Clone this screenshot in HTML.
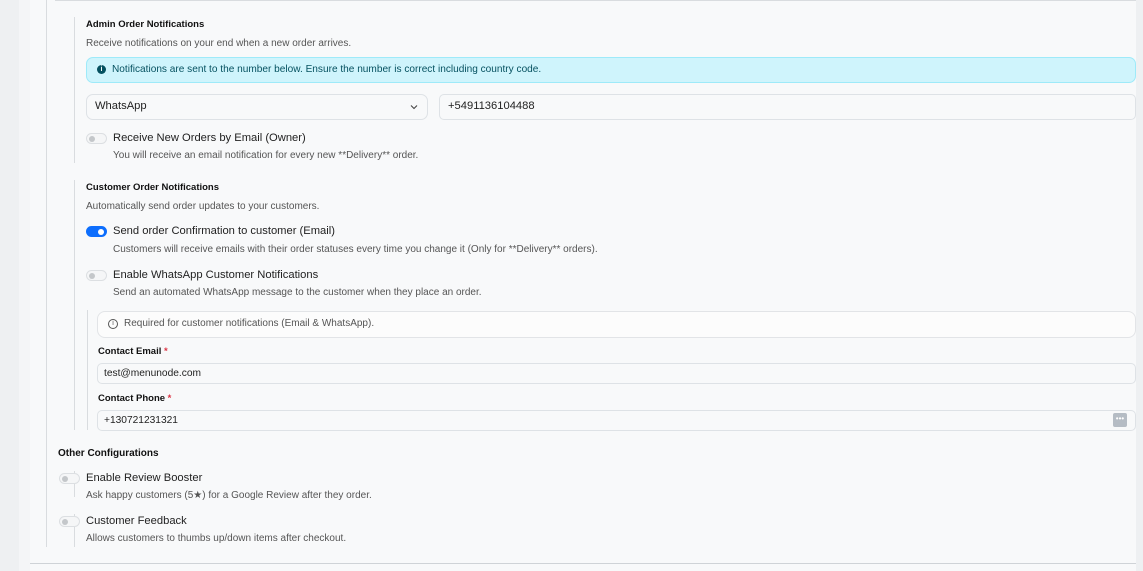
<!DOCTYPE html>
<html><head><style>
*{margin:0;padding:0;box-sizing:border-box}
body{width:1143px;height:571px;overflow:hidden;background:#f8f9fa;font-family:"Liberation Sans",sans-serif;position:relative;color:#212529}
.a{position:absolute;white-space:nowrap}
.h{font-weight:bold;font-size:9.5px;color:#111}
.d{font-size:10px;color:#555}
.l{font-size:11.2px;color:#222}
.vl{position:absolute;width:1px;background:#d9dcdf}
.tg{position:absolute;width:21px;height:11px;border:1px solid #dcdfe2;border-radius:6px;background:#f5f6f7}
.tg::after{content:"";position:absolute;left:2px;top:2px;width:6px;height:6px;border-radius:50%;background:#c4c7ca}
.tg.on{background:#0d6efd;border-color:#0d6efd}
.tg.on::after{left:auto;right:2px;background:#fff}
.box{position:absolute;border:1px solid #dee2e6;background:#f8f9fa}
</style></head><body>
<div class="a" style="left:0;top:0;width:19px;height:571px;background:#eef0f2"></div>
<div class="a" style="left:19px;top:0;width:11px;height:571px;background:#f4f5f7"></div>
<div class="a" style="left:1136px;top:0;width:7px;height:571px;background:#eef0f2"></div>
<div class="a" style="left:55px;top:0;width:1081px;height:1px;background:#d9dcdf"></div>
<div class="vl" style="left:46px;top:0;height:547px"></div>
<div class="vl" style="left:74px;top:17px;height:146px"></div>

<div class="a h" style="left:86px;top:19px">Admin Order Notifications</div>
<div class="a d" style="left:86px;top:38px">Receive notifications on your end when a new order arrives.</div>
<div class="a" style="left:86px;top:57px;width:1050px;height:26px;background:#cff4fc;border:1px solid #9eeaf9;border-radius:7px"></div>
<div class="a" style="left:97px;top:65px;width:9px;height:9px;border-radius:50%;background:#055160;color:#fff;font-size:7px;font-weight:bold;text-align:center;line-height:9px">i</div>
<div class="a" style="left:112px;top:64px;font-size:10.1px;color:#055160">Notifications are sent to the number below. Ensure the number is correct including country code.</div>
<div class="box" style="left:86px;top:94px;width:342px;height:26px;border-radius:7px"></div>
<div class="a" style="left:95px;top:100px;font-size:11.2px;color:#222">WhatsApp</div>
<svg class="a" style="left:409px;top:103px" width="10" height="8"><path d="M2 2.5 5 5.5 8 2.5" fill="none" stroke="#444" stroke-width="1.1"/></svg>
<div class="box" style="left:439px;top:94px;width:697px;height:26px;border-radius:5px"></div>
<div class="a" style="left:448px;top:100px;font-size:11.2px;color:#222">+5491136104488</div>
<div class="tg" style="left:86px;top:133px"></div>
<div class="a l" style="left:113px;top:132px">Receive New Orders by Email (Owner)</div>
<div class="a d" style="left:113px;top:150px">You will receive an email notification for every new **Delivery** order.</div>

<div class="vl" style="left:74px;top:180px;height:250px"></div>
<div class="a h" style="left:86px;top:182px">Customer Order Notifications</div>
<div class="a d" style="left:86px;top:201px">Automatically send order updates to your customers.</div>
<div class="tg on" style="left:86px;top:226px"></div>
<div class="a l" style="left:113px;top:225px">Send order Confirmation to customer (Email)</div>
<div class="a d" style="left:113px;top:244px">Customers will receive emails with their order statuses every time you change it (Only for **Delivery** orders).</div>
<div class="tg" style="left:86px;top:270px"></div>
<div class="a l" style="left:113px;top:269px">Enable WhatsApp Customer Notifications</div>
<div class="a d" style="left:113px;top:287px">Send an automated WhatsApp message to the customer when they place an order.</div>

<div class="vl" style="left:87px;top:310px;height:120px"></div>
<div class="a" style="left:97px;top:311px;width:1039px;height:27px;border:1px solid #e2e4e7;border-radius:8px;background:#fcfcfc"></div>
<div class="a" style="left:108px;top:319px;width:10px;height:10px;border:1px solid #555;border-radius:50%;font-size:7px;text-align:center;line-height:8px;color:#555">i</div>
<div class="a d" style="left:124px;top:318px">Required for customer notifications (Email &amp; WhatsApp).</div>
<div class="a h" style="left:98px;top:346px">Contact Email <span style="color:#dc3545">*</span></div>
<div class="box" style="left:97px;top:363px;width:1039px;height:21px;border-radius:5px"></div>
<div class="a" style="left:104px;top:368px;font-size:10.2px;color:#222">test@menunode.com</div>
<div class="a h" style="left:98px;top:393px">Contact Phone <span style="color:#dc3545">*</span></div>
<div class="box" style="left:97px;top:410px;width:1039px;height:21px;border-radius:5px"></div>
<div class="a" style="left:104px;top:415px;font-size:10.2px;color:#222">+130721231321</div>
<div class="a" style="left:1113px;top:413px;width:14px;height:14px;border-radius:2px;background:#b5bcc4;color:#fff;font-size:8px;line-height:12px;text-align:center">•••</div>

<div class="a" style="left:58px;top:448px;font-weight:bold;font-size:10px;color:#111">Other Configurations</div>
<div class="vl" style="left:74px;top:471px;height:26px"></div>
<div class="tg" style="left:59px;top:473px"></div>
<div class="a l" style="left:86px;top:472px">Enable Review Booster</div>
<div class="a d" style="left:86px;top:490px">Ask happy customers (5★) for a Google Review after they order.</div>
<div class="vl" style="left:74px;top:514px;height:33px"></div>
<div class="tg" style="left:59px;top:516px"></div>
<div class="a l" style="left:86px;top:515px">Customer Feedback</div>
<div class="a d" style="left:86px;top:533px">Allows customers to thumbs up/down items after checkout.</div>

<div class="a" style="left:30px;top:563px;width:1106px;height:1px;background:#cfd3d7"></div>
</body></html>
